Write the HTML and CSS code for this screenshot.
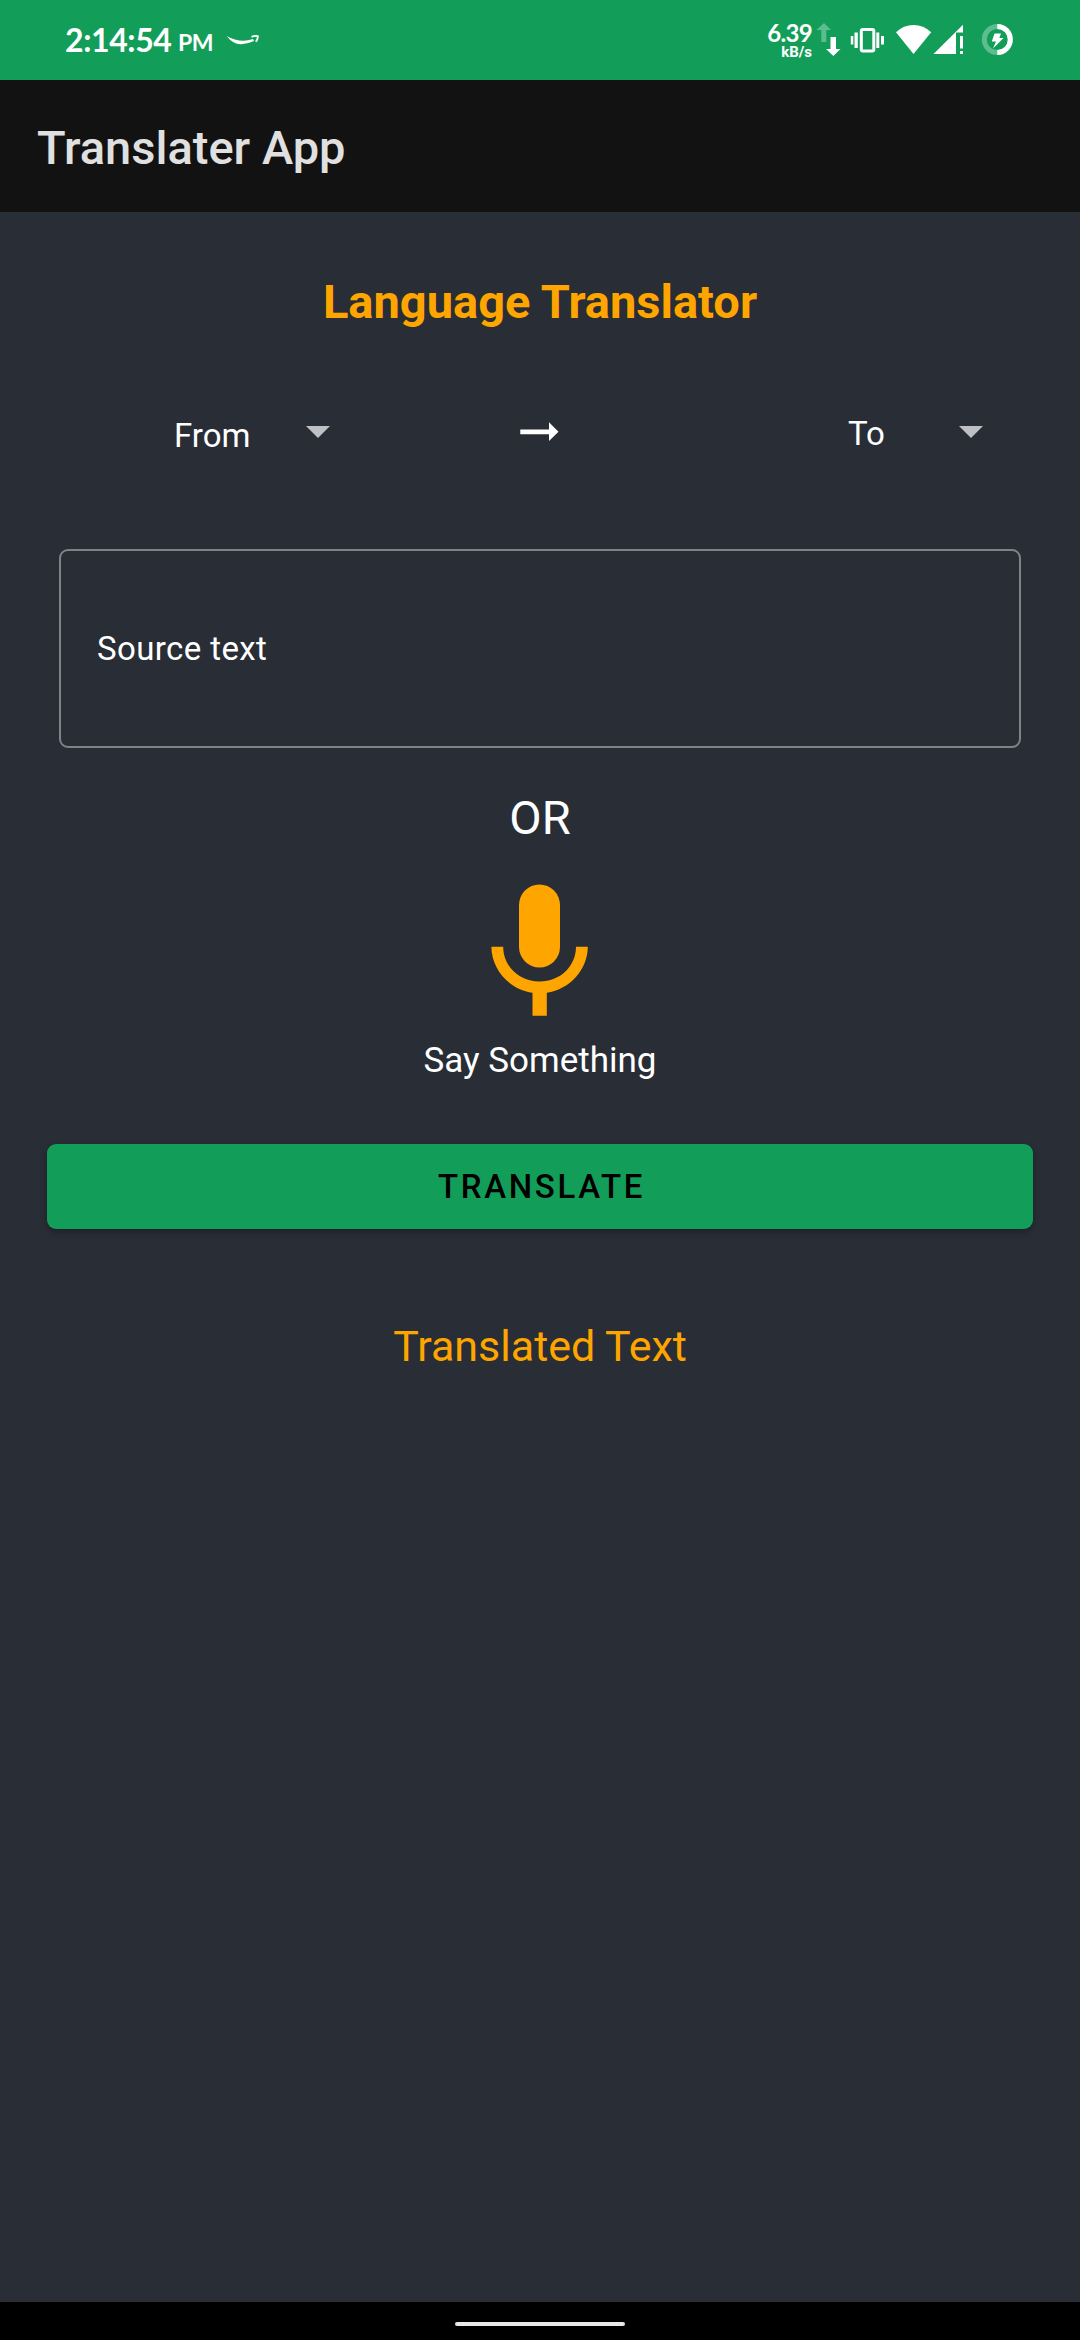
FILE: index.html
```html
<!DOCTYPE html>
<html lang="en">
<head>
<meta charset="utf-8">
<title>Translater App</title>
<link rel="stylesheet" href="styles.css">
</head>
<body>
<div class="status">
  <span class="time">2:14:54</span><span class="meridiem">PM</span>
  <svg class="smile" width="34" height="12" viewBox="0 0 34 12" fill="none"><path d="M.5 1Q14 8.500 27 4L28 6Q21 9.500 14.500 9.300Q7 9 .5 1Z" fill="#fff"/><path d="M25.500 1.800Q29 .5 31.800 1.200Q32 4 29.800 6.800" stroke="#fff" stroke-width="1.800"/></svg>
  <div class="speed"><span class="rate">6.39</span><span class="unit">kB/s</span></div>
  <svg class="system-icons" width="200" height="40" viewBox="816 10 200 40" fill="#fff">
    <path opacity=".32" d="M824 23L831 30H826.300V42H821.300V30H816.500Z"/>
    <path d="M830.500 37H836V49H840.500L833.300 56L826 49H830.500Z"/>
    <rect x="861.300" y="29.500" width="12.500" height="21.500" rx="1.500" fill="none" stroke="#fff" stroke-width="3"/>
    <path d="M854.500 32.500H857.800V48H854.500ZM850.800 36H853.300V44.500H850.800ZM876.300 32.500H879.300V48H876.300ZM881 36H884V44.500H881Z"/>
    <path d="M896 32.300Q903.500 25 913.500 25Q923.500 25 931.200 32.300L913.500 54Z"/>
    <path d="M933.500 54L963 24.700V32.500H956V54ZM960 36H963V48.500H960ZM960 51H963V54H960Z"/>
    <circle cx="997.300" cy="39.500" r="13" fill="none" stroke="#fff" stroke-opacity=".32" stroke-width="5"/>
    <path d="M997.300 26.500A13 13 0 0 1 997.300 52.500" fill="none" stroke="#fff" stroke-width="5"/>
    <path d="M994.500 33.500H1001L999.300 38H1003.500L993 48.500L996 41.500H991.800Z"/>
  </svg>
</div>
<header class="app-bar">Translater App</header>
<main>
  <h1>Language Translator</h1>
  <div class="languages">
    <div class="picker from"><span>From</span><svg width="24" height="12" viewBox="0 0 24 12"><path d="M0 0H24L12 12Z"/></svg></div>
    <svg class="arrow" width="39" height="20" viewBox="0 0 39 20"><path d="M.3 7.500H29V.3L38.500 9.700L29 19V12.200H.3Z"/></svg>
    <div class="picker to"><span>To</span><svg width="24" height="12" viewBox="0 0 24 12"><path d="M0 0H24L12 12Z"/></svg></div>
  </div>
  <div class="source">Source text</div>
  <p class="or">OR</p>
  <svg class="mic" width="98" height="132" viewBox="0 0 98 132"><rect x="28" y=".5" width="41" height="83" rx="20.500"/><path d="M.4 62.700H12.200C12.200 82 28 97.500 48.600 97.500S85 82 85 62.700H96.800C96.800 85 79 105.500 55.800 108.700V131.700H41.500V108.700C18 105.500.4 85 .4 62.700Z"/></svg>
  <p class="say">Say Something</p>
  <button class="translate">TRANSLATE</button>
  <p class="result">Translated Text</p>
</main>
<footer class="nav-bar"><div class="handle"></div></footer>
</body>
</html>
```

FILE: styles.css
```css
* { box-sizing: border-box; }
body {
  margin: 0;
  height: 2340px;
  display: flex;
  flex-direction: column;
  background: #292d36;
  color: #fff;
  font-family: Roboto, sans-serif;
}
svg { display: block; flex: none; }
.status {
  height: 80px;
  padding: 0 64px 0 65px;
  display: flex;
  background: #129e59;
  font-family: Lato, sans-serif;
  white-space: nowrap;
}
.time {
  width: 106px;
  margin-right: 7px;
  font-size: 32px;
  font-weight: 700;
  line-height: 80px;
  letter-spacing: -0.4px;
}
.meridiem {
  width: 34px;
  font-size: 23px;
  font-weight: 700;
  line-height: 85px;
  letter-spacing: -0.5px;
}
.smile { margin: 35px 0 0 14px; }
.speed {
  width: 60px;
  margin-left: auto;
  padding-top: 19px;
  display: flex;
  flex-direction: column;
  align-items: flex-end;
  font-weight: 700;
}
.rate { font-size: 24px; line-height: 27px; letter-spacing: -0.7px; }
.unit { font-family: Roboto, sans-serif; font-size: 15px; line-height: 12px; }
.system-icons { margin: 10px 0 0 4px; overflow: visible; }
.app-bar {
  height: 132px;
  padding: 40px 37px 0;
  background: #121212;
  color: #e0e0e0;
  font-size: 47px;
  font-weight: 500;
  line-height: 56px;
}
main {
  flex: 1;
  display: flex;
  flex-direction: column;
  align-items: center;
}
h1, p { margin: 0; }
h1 {
  margin-top: 62px;
  color: #ffa500;
  font-size: 47px;
  font-weight: 700;
  line-height: 56px;
}
.languages {
  width: 100%;
  height: 60px;
  margin-top: 78px;
  padding: 0 97px 0 174px;
  display: flex;
  justify-content: space-between;
  font-size: 33px;
  line-height: 40px;
}
.picker { display: flex; justify-content: space-between; }
.picker svg { margin-top: 18px; fill: #bfc0c3; }
.picker span { padding-top: 6px; }
.picker.from span { padding-top: 8px; }
.from { width: 156px; }
.to { width: 135px; }
.arrow { margin: 14px 99px 0 0; fill: #fff; }
.source {
  width: 962px;
  height: 199px;
  margin-top: 81px;
  padding-left: 36px;
  border: 2px solid #7f8287;
  border-radius: 9px;
  font-size: 33px;
  line-height: 195px;
  letter-spacing: 0.4px;
}
.or { margin-top: 42px; font-size: 47px; line-height: 56px; }
.mic { margin-top: 38px; fill: #ffa500; }
.say { margin-top: 23px; font-size: 35px; line-height: 44px; }
.translate {
  width: 986px;
  height: 85px;
  margin-top: 61px;
  padding: 0 0 0 3px;
  border: 0;
  border-radius: 9px;
  background: #129e59;
  box-shadow: 0 3px 6px rgba(0, 0, 0, 0.3);
  color: #000;
  font: 500 33px/85px Roboto, sans-serif;
  letter-spacing: 2.7px;
}
.result {
  margin-top: 92px;
  color: #ffa500;
  font-size: 43px;
  line-height: 50px;
}
.nav-bar {
  height: 38px;
  padding-top: 20px;
  background: #000;
}
.handle {
  width: 170px;
  height: 4px;
  margin: 0 auto;
  border-radius: 2px;
  background: #e8e8e8;
}
```
